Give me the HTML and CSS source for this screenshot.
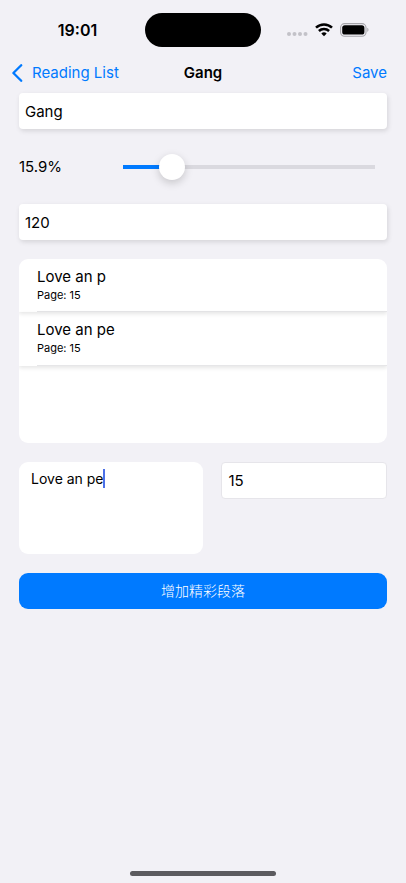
FILE: index.html
```html
<!DOCTYPE html>
<html lang="en">
<head>
<meta charset="utf-8">
<meta name="viewport" content="width=device-width, initial-scale=1">
<title>Gang</title>
<link rel="stylesheet" href="styles.css">
</head>
<body>
<div class="screen">
  <header>
    <div class="status">
      <time class="clock">19:01</time>
      <div class="island"></div>
      <div class="indicators">
        <svg class="dots" width="22" height="16" viewBox="0 0 22 16" fill="#c3c2c8" aria-hidden="true">
          <circle cx="3" cy="12" r="2"/><circle cx="8.5" cy="12" r="2"/><circle cx="14" cy="12" r="2"/><circle cx="19.5" cy="12" r="2"/>
        </svg>
        <svg width="18" height="14" viewBox="0 0 18 14" fill="none" stroke="#000" stroke-width="2.5" aria-hidden="true">
          <path d="M1 4.7a11.6 11.6 0 0 1 16 0"/>
          <path d="M3.9 8a7.4 7.4 0 0 1 10.2 0"/>
          <path d="M9 13.3 6.3 10.6a3.9 3.9 0 0 1 5.4 0z" fill="#000" stroke="none"/>
        </svg>
        <svg width="29" height="14" viewBox="0 0 29 14" aria-hidden="true">
          <rect x=".6" y=".6" width="25.4" height="12.6" rx="4" fill="none" stroke="#a5a4a9" stroke-width="1.1"/>
          <rect x="2.2" y="2.2" width="22.2" height="9.4" rx="2.6"/>
          <path d="M27.3 4.8c1.6.7 1.6 3.5 0 4.2z" fill="#a5a4a9"/>
        </svg>
      </div>
    </div>
    <nav class="navbar">
      <a class="back" href="#">
        <svg width="12" height="18" viewBox="0 0 12 18" fill="none" stroke="#007aff" stroke-width="2.3" stroke-linecap="round" stroke-linejoin="round" aria-hidden="true"><path d="M10.2 1.2 2.4 9l7.8 7.8"/></svg>
        <span>Reading List</span>
      </a>
      <h1>Gang</h1>
      <button class="save" type="submit" form="book">Save</button>
    </nav>
  </header>
  <form class="book" id="book">
    <input class="field raised" type="text" value="Gang" aria-label="Title">
    <div class="progress">
      <label for="progress">15.9%</label>
      <input class="slider" id="progress" type="range" min="0" max="100" step="0.1" value="15.9">
    </div>
    <input class="field raised" type="text" inputmode="numeric" value="120" aria-label="Pages">
    <ul class="excerpts">
      <li><span class="quote">Love an p</span><span class="page">Page: 15</span></li>
      <li><span class="quote">Love an pe</span><span class="page">Page: 15</span></li>
    </ul>
    <div class="entry">
      <div class="note">
        <textarea aria-label="Excerpt">Love an pe</textarea>
        <span class="caret"></span>
      </div>
      <input class="field outlined" type="text" inputmode="numeric" value="15" aria-label="Page">
    </div>
    <button class="add" type="button" lang="zh-CN">增加精彩段落</button>
  </form>
  <div class="home"></div>
</div>
</body>
</html>
```
FILE: styles.css
```css
* {
  box-sizing: border-box;
}

body {
  margin: 0;
  background: #f2f1f6;
  color: #000;
  font-family: Inter, "Noto Sans CJK SC", sans-serif;
  font-size: 15px;
  line-height: 20px;
}

input,
textarea,
button {
  margin: 0;
  border: 0;
  font: inherit;
  color: inherit;
}

.screen {
  display: flex;
  flex-direction: column;
  min-height: 100vh;
}

.status {
  display: grid;
  grid-template-columns: 1fr 116px 1fr;
  align-items: center;
  height: 60px;
}

.clock {
  padding-left: 10px;
  text-align: center;
  font-size: 16px;
  font-weight: 600;
}

.island {
  height: 34px;
  border-radius: 17px;
  background: #000;
}

.indicators {
  display: flex;
  align-items: center;
  justify-content: flex-end;
  gap: 7px;
  padding-right: 37px;
}

.dots {
  align-self: end;
}

.navbar {
  display: grid;
  grid-template-columns: 1fr auto 1fr;
  align-items: center;
  height: 25px;
  padding: 0 11px;
  margin-bottom: 8px;
}

.navbar h1 {
  margin: 0;
  font-size: 15px;
  font-weight: 600;
}

.back {
  display: flex;
  align-items: center;
  gap: 9px;
  color: #007aff;
  text-decoration: none;
}

.save {
  justify-self: end;
  padding: 0 8px;
  background: none;
  color: #007aff;
}

.book {
  display: flex;
  flex-direction: column;
  gap: 19px;
  padding: 0 19px;
}

.field {
  width: 100%;
  height: 36px;
  padding: 0 6px;
  border-radius: 4px;
  background: #fff;
}

.raised {
  box-shadow: 1px 2px 5px rgba(0, 0, 0, 0.12);
}

.outlined {
  height: 37px;
  border: 1px solid #e6e5ea;
}

.progress {
  display: grid;
  grid-template-columns: 104px 1fr;
  align-items: center;
  height: 37px;
  padding-right: 12px;
}

.slider {
  appearance: none;
  width: 100%;
  height: 26px;
  border-radius: 2px;
  background: linear-gradient(#007aff, #007aff) 0 11px / 18% 4px no-repeat,
    linear-gradient(#dad9df, #dad9df) 0 11px / 100% 4px no-repeat;
}

.slider::-webkit-slider-thumb {
  appearance: none;
  width: 26px;
  height: 26px;
  border-radius: 50%;
  background: #fff;
  box-shadow: 0 3px 8px rgba(0, 0, 0, 0.18);
}

.excerpts {
  height: 184px;
  margin: 0;
  padding: 0;
  overflow: hidden;
  border-radius: 9px;
  background: #fff;
  list-style: none;
}

.excerpts li {
  display: flex;
  flex-direction: column;
  height: 53px;
  padding: 8px 18px;
  background: linear-gradient(#e6e6e8, #e6e6e8) 18px 100% / 100% 1px no-repeat;
  box-shadow: 0 2px 4px rgba(0, 0, 0, 0.1);
}

.excerpts li + li {
  height: 54px;
}

.page {
  font-size: 11px;
  line-height: 16px;
}

.entry {
  display: grid;
  grid-template-columns: 1fr 45%;
  align-items: start;
  gap: 18px;
}

.note {
  position: relative;
  height: 92px;
}

.note textarea {
  display: block;
  width: 100%;
  height: 100%;
  padding: 7px 12px;
  border-radius: 9px;
  background: #fff;
  font-size: 14px;
  resize: none;
}

.caret {
  position: absolute;
  top: 7px;
  left: 84px;
  width: 2px;
  height: 19px;
  background: #4c70e8;
}

.add {
  height: 36px;
  border-radius: 9px;
  background: #007aff;
  color: #fff;
  font-size: 14px;
  font-weight: 300;
}

.home {
  width: 36%;
  height: 5px;
  margin: auto auto 7px;
  border-radius: 3px;
  background: #5c5b5f;
}
```
